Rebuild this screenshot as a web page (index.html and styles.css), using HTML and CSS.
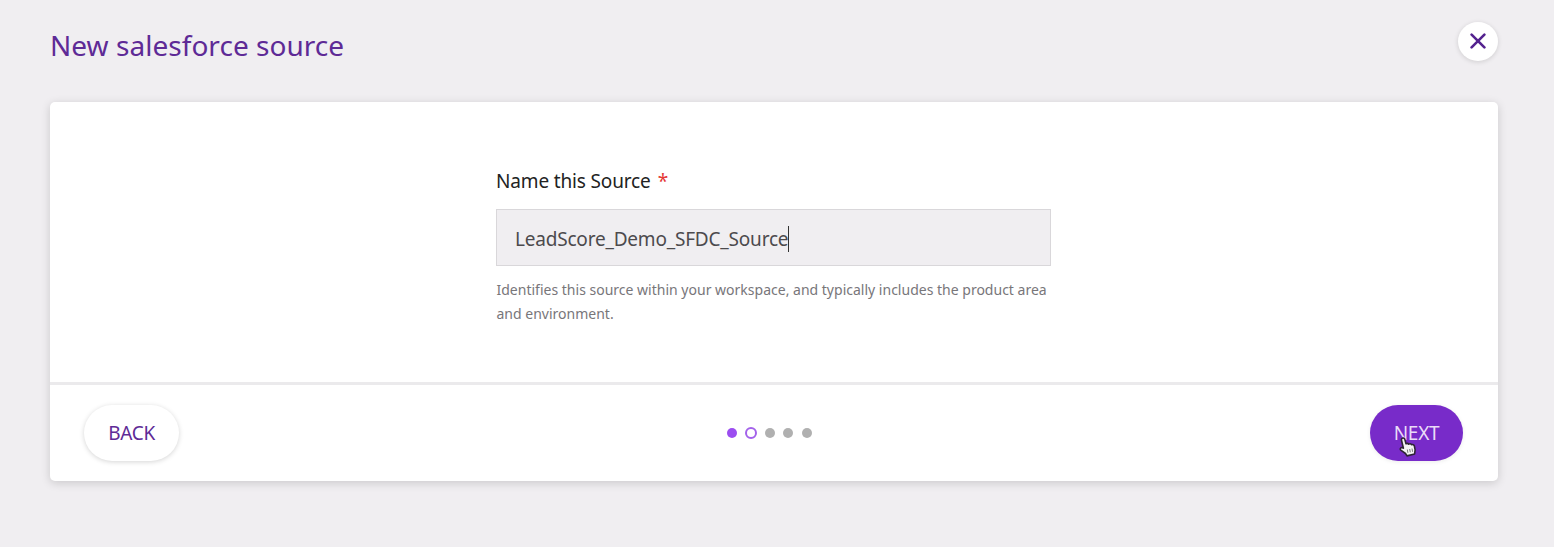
FILE: index.html
```
<!DOCTYPE html>
<html lang="en">
<head>
<meta charset="utf-8">
<title>New salesforce source</title>
<link rel="stylesheet" href="styles.css">
</head>
<body>
<main class="page">
  <header class="header">
    <h1 class="title">New salesforce source</h1>
    <button class="close" aria-label="Close">
      <svg width="16" height="16" viewBox="0 0 16 16"><path d="M1.6 1.6 14.4 14.4M14.4 1.6 1.6 14.4"/></svg>
    </button>
  </header>
  <section class="card">
    <div class="content">
      <div class="field">
        <div class="label"><span class="label-text">Name this Source</span><span class="required">*</span></div>
        <div class="input"><span class="value">LeadScore_Demo_SFDC_Source</span><span class="caret"></span></div>
        <p class="help">Identifies this source within your workspace, and typically includes the product area<br>and environment.</p>
      </div>
    </div>
    <footer class="footer">
      <button class="btn back">BACK</button>
      <div class="steps">
        <span class="dot done"></span><span class="dot current"></span><span class="dot"></span><span class="dot"></span><span class="dot"></span>
      </div>
      <button class="btn next">NEXT
        <svg class="pointer" width="18" height="20" viewBox="0 0 18 20"><path d="M3.400 1.200C4.600.8 5.600 1.400 5.900 2.600L7 6.700C8 6.100 9.100 6.300 9.700 7.200 10.700 6.500 12 6.600 12.500 7.700 13.900 7.200 15 7.800 15.400 9.100L16.100 12.900 15.600 17 8 18.900 6.500 16.500 1.800 13.200C.7 12.300 1.700 10.200 3.100 10.600L4.400 11.200 2.500 3.200C2.300 2.300 2.600 1.500 3.400 1.200Z"/><path class="crease" d="M8.300 12.500 8.900 15.800M10.700 12 11.300 15.300M13 11.500 13.600 14.800"/></svg>
      </button>
    </footer>
  </section>
</main>
</body>
</html>
```

FILE: styles.css
```
* { box-sizing: border-box; }
body {
  margin: 0;
  background: #f0eef1;
  font-family: "Noto Sans", sans-serif;
  color: #222;
}
button { font-family: inherit; border: 0; padding: 0; }
.page { height: 547px; padding: 22px 56px 0 50px; overflow: hidden; }
.header {
  display: flex;
  justify-content: space-between;
  align-items: flex-start;
  height: 80px;
}
.title {
  margin: 4px 0 0;
  font-size: 28px;
  line-height: 38px;
  letter-spacing: .04px;
  font-weight: 400;
  color: #5e2a96;
}
.close {
  display: flex;
  align-items: center;
  justify-content: center;
  width: 40px;
  height: 39px;
  padding-bottom: 1px;
  border-radius: 50%;
  background: #fff;
  box-shadow: 0 1px 5px rgba(0, 0, 0, .14);
}
.close svg { fill: none; stroke: #54228f; stroke-width: 2.6; stroke-linecap: round; }
.card {
  display: flex;
  flex-direction: column;
  height: 379px;
  border-radius: 5px;
  background: #fff;
  box-shadow: 0 2px 10px rgba(0, 0, 0, .16);
}
.content {
  display: flex;
  justify-content: center;
  height: 280px;
  padding: 65px 1px 0 0;
}
.field { width: 555px; }
.label { display: flex; gap: 7px; font-size: 19px; line-height: 28px; }
.label-text { letter-spacing: -.15px; }
.required { color: #e53935; }
.input {
  display: flex;
  align-items: center;
  height: 57px;
  margin-top: 14px;
  padding: 2px 0 0 18px;
  border: 1px solid #d9d7da;
  background: #f0eef1;
  font-size: 19px;
  letter-spacing: -.2px;
  color: #4c4a4d;
}
.caret { width: 1px; height: 26px; background: #333; }
.help {
  margin: 12px 0 0;
  padding-left: .5px;
  font-size: 14px;
  letter-spacing: .005px;
  line-height: 24px;
  white-space: nowrap;
  color: #78767a;
}
.footer {
  display: flex;
  justify-content: space-between;
  align-items: center;
  height: 99px;
  padding: 0 35px 0 34px;
  border-top: 3px solid #ebeaec;
}
.btn {
  position: relative;
  width: 95px;
  height: 56px;
  border-radius: 28px;
  padding-top: 1px;
  font-size: 19px;
  letter-spacing: -.3px;
  line-height: 55px;
}
.back {
  background: #fff;
  color: #5e2a96;
  box-shadow: 0 1px 5px rgba(0, 0, 0, .17);
}
.next {
  width: 93px;
  background: #782bc9;
  color: #eadcf8;
  box-shadow: 0 1px 4px rgba(0, 0, 0, .08);
}
.pointer { position: absolute; left: 29px; top: 32px; fill: #f4f4f4; stroke: #2e2435; stroke-width: 1.6; stroke-linejoin: round; }
.crease { fill: none; stroke: #777; stroke-width: 1; }
.steps { display: flex; align-items: center; gap: 8.75px; margin-right: 10px; }
.dot { width: 10px; height: 10px; border-radius: 50%; background: #b0b0b0; }
.done { background: #9b4df0; }
.current { width: 12px; height: 12px; margin: 0 -1px; border: 2px solid #a362ea; background: #fff; }
```
